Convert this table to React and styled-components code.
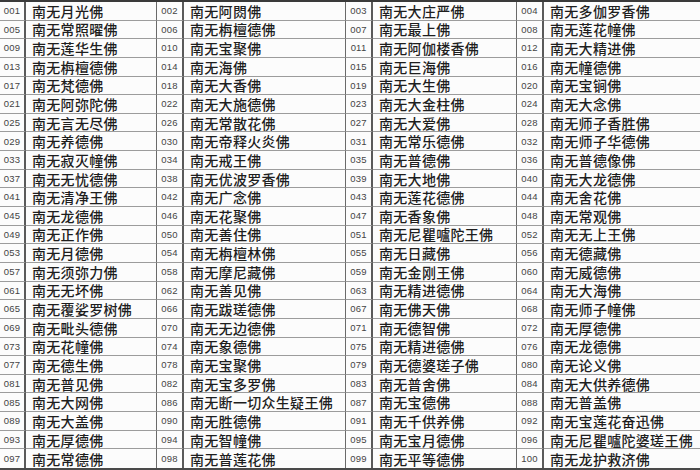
import React from 'react';
import styled, {createGlobalStyle} from 'styled-components';

const GlobalStyle = createGlobalStyle`
  html, body {
    margin: 0;
    padding: 0;
    background: #fcfcfc;
  }
`;

const names = [
  '南无月光佛', '南无阿閦佛', '南无大庄严佛', '南无多伽罗香佛',
  '南无常照曜佛', '南无栴檀德佛', '南无最上佛', '南无莲花幢佛',
  '南无莲华生佛', '南无宝聚佛', '南无阿伽楼香佛', '南无大精进佛',
  '南无栴檀德佛', '南无海佛', '南无巨海佛', '南无幢德佛',
  '南无梵德佛', '南无大香佛', '南无大生佛', '南无宝锏佛',
  '南无阿弥陀佛', '南无大施德佛', '南无大金柱佛', '南无大念佛',
  '南无言无尽佛', '南无常散花佛', '南无大爱佛', '南无师子香胜佛',
  '南无养德佛', '南无帝释火炎佛', '南无常乐德佛', '南无师子华德佛',
  '南无寂灭幢佛', '南无戒王佛', '南无普德佛', '南无普德像佛',
  '南无无忧德佛', '南无优波罗香佛', '南无大地佛', '南无大龙德佛',
  '南无清净王佛', '南无广念佛', '南无莲花德佛', '南无舍花佛',
  '南无龙德佛', '南无花聚佛', '南无香象佛', '南无常观佛',
  '南无正作佛', '南无善住佛', '南无尼瞿嚧陀王佛', '南无无上王佛',
  '南无月德佛', '南无栴檀林佛', '南无日藏佛', '南无德藏佛',
  '南无须弥力佛', '南无摩尼藏佛', '南无金刚王佛', '南无威德佛',
  '南无无坏佛', '南无善见佛', '南无精进德佛', '南无大海佛',
  '南无覆娑罗树佛', '南无跋瑳德佛', '南无佛天佛', '南无师子幢佛',
  '南无毗头德佛', '南无无边德佛', '南无德智佛', '南无厚德佛',
  '南无花幢佛', '南无象德佛', '南无精进德佛', '南无龙德佛',
  '南无德生佛', '南无宝聚佛', '南无德婆瑳子佛', '南无论义佛',
  '南无普见佛', '南无宝多罗佛', '南无普舍佛', '南无大供养德佛',
  '南无大网佛', '南无断一切众生疑王佛', '南无宝德佛', '南无普盖佛',
  '南无大盖佛', '南无胜德佛', '南无千供养佛', '南无宝莲花奋迅佛',
  '南无厚德佛', '南无智幢佛', '南无宝月德佛', '南无尼瞿嚧陀婆瑳王佛',
  '南无常德佛', '南无普莲花佛', '南无平等德佛', '南无龙护救济佛'
];

const Sheet = styled.div`
  width: 700px;
  height: 470px;
  box-sizing: border-box;
  display: grid;
  grid-template-columns: 26px 130px 28px 161px 28px 143px 28px 156px;
  grid-template-rows: repeat(25, minmax(0, 1fr));
  border-top: 2px solid #3a3a3a;
  border-bottom: 2px solid #4a4a4a;
  overflow: hidden;
`;

const NumCell = styled.div`
  display: flex;
  align-items: center;
  justify-content: center;
  min-height: 0;
  box-sizing: border-box;
  line-height: 1;
  border-right: 2px solid #5a5a5a;
  border-left: ${p => (p.$first ? 'none' : '1px solid #6a6a6a')};
  border-bottom: ${p => (p.$last ? 'none' : '1px solid #9c9c9c')};
  font-family: "Liberation Sans", Arial, sans-serif;
  font-size: 9.5px;
  color: #444;
  letter-spacing: 0.2px;
`;

const NameCell = styled.div`
  display: flex;
  align-items: center;
  min-height: 0;
  box-sizing: border-box;
  line-height: 1;
  padding-left: 6px;
  white-space: nowrap;
  border-bottom: ${p => (p.$last ? 'none' : '1px solid #9c9c9c')};
  font-family: "Noto Sans CJK SC", "Noto Sans", sans-serif;
  font-size: 14px;
  font-weight: 500;
  color: #1e1e1e;
  letter-spacing: 0.3px;
`;

const pad = n => String(n).padStart(3, '0');

export default function App() {
  return (
    <>
      <GlobalStyle />
      <Sheet>
        {names.map((name, i) => {
          const last = i >= 96;
          return (
            <React.Fragment key={i}>
              <NumCell $first={i % 4 === 0} $last={last}>{pad(i + 1)}</NumCell>
              <NameCell $last={last}>{name}</NameCell>
            </React.Fragment>
          );
        })}
      </Sheet>
    </>
  );
}
